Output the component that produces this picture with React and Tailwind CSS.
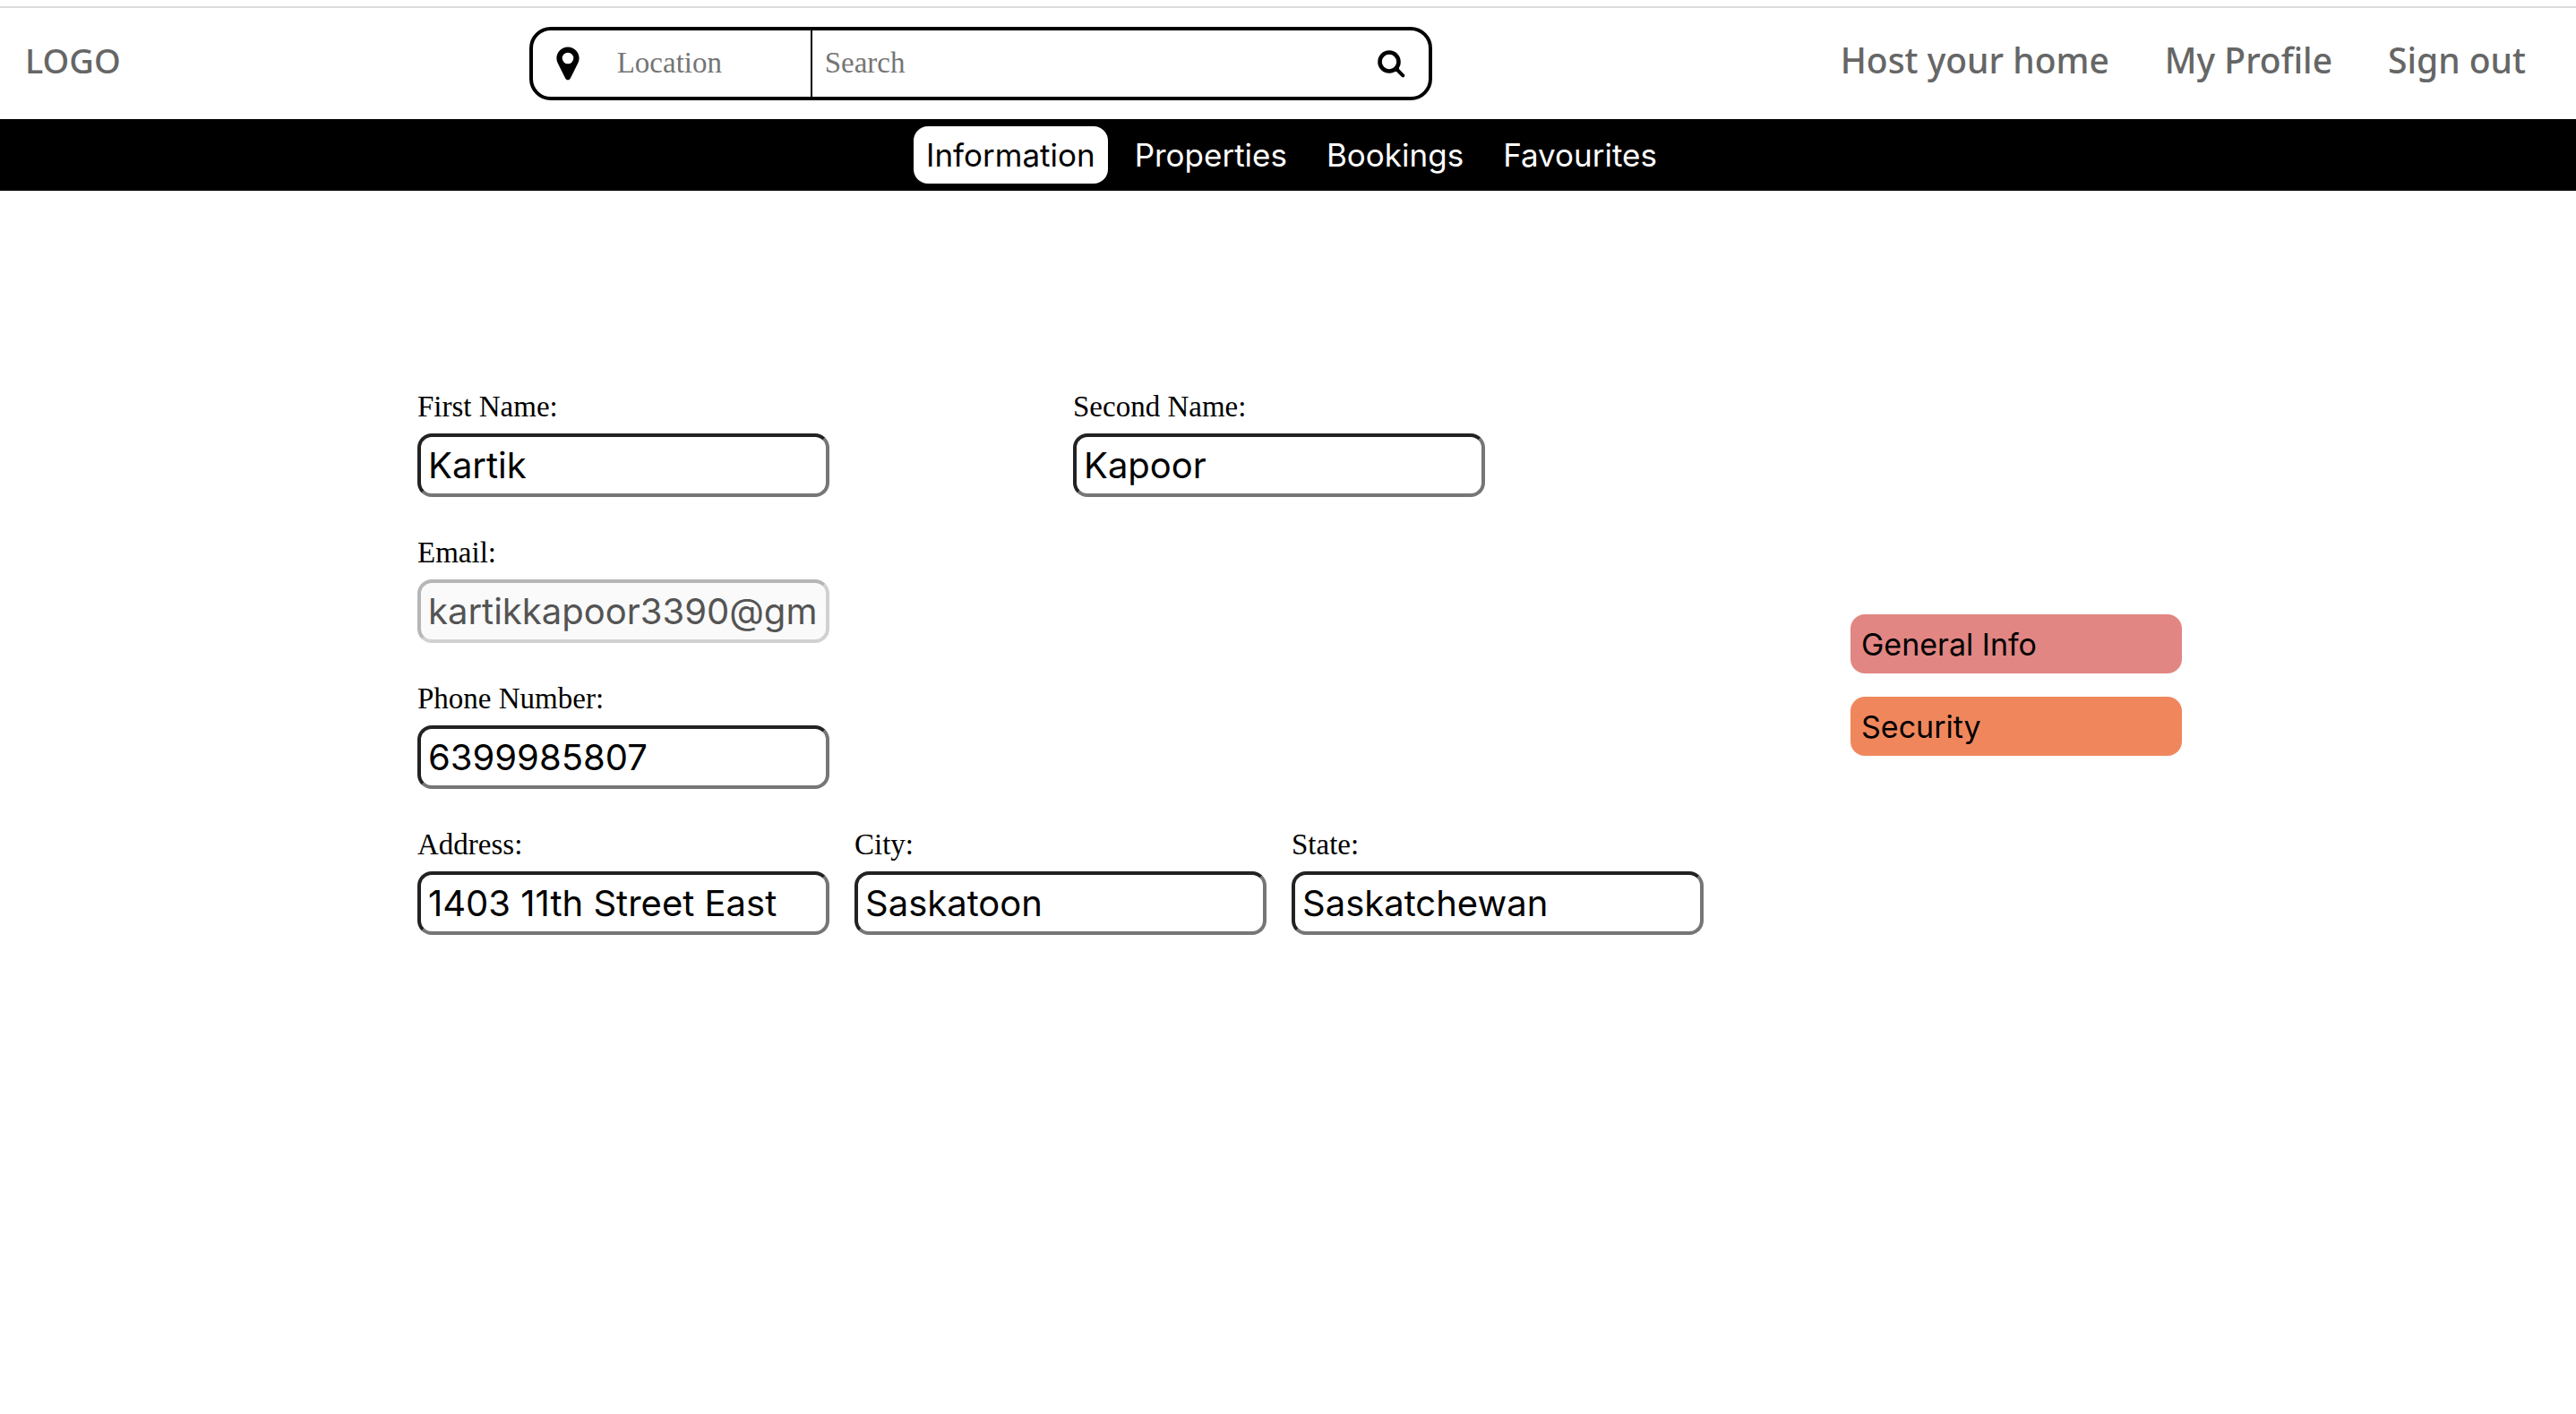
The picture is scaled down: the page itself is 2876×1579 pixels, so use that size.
const links = ["Host your home", "My Profile", "Sign out"];
const tabs = ["Information", "Properties", "Bookings", "Favourites"];

function PinIcon() {
  return (
    <svg viewBox="0 0 26 38" className="h-[38px] w-[26px]" aria-hidden="true">
      <path
        fillRule="evenodd"
        d="M13 .4C6 .4.4 6 .4 13c0 2 .4 3.700 1.200 5.300l8.600 17.200c.6 1.100 1.500 1.800 2.800 1.800s2.200-.7 2.800-1.800l8.600-17.200c.8-1.600 1.200-3.300 1.200-5.300C25.600 6 20 .4 13 .4zm0 6.300a6.300 6.300 0 1 1 0 12.600 6.300 6.300 0 0 1 0-12.600z"
      />
    </svg>
  );
}

function SearchIcon() {
  return (
    <svg viewBox="0 0 31 31" className="size-[31px]" fill="none" stroke="black" aria-hidden="true">
      <circle cx="13" cy="13" r="10.500" strokeWidth="4.600" />
      <path d="M20.500 20.500l2 2" strokeWidth="5" />
      <path d="M22 22l6.300 6.300" strokeWidth="4" strokeLinecap="round" />
    </svg>
  );
}

function Field({ id, label, value, type = "text", disabled = false }) {
  return (
    <div className="flex w-[460px] flex-col">
      <label htmlFor={id} className="h-[52px] font-['Liberation_Serif',serif] text-[33px] leading-[44px]">
        {label}
      </label>
      <input
        id={id}
        type={type}
        defaultValue={value}
        disabled={disabled}
        className="h-[71px] w-full rounded-2xl border-4 border-t-[#222] border-r-[#767676] border-b-[#767676] border-l-[#222] bg-white px-2 text-[40px] disabled:border-t-[#b6b6b6] disabled:border-r-[#d1d1d1] disabled:border-b-[#d1d1d1] disabled:border-l-[#b6b6b6] disabled:bg-[#fafafa] disabled:text-[#545454]"
      />
    </div>
  );
}

export default function App() {
  return (
    <div className="min-h-screen bg-white pt-[7px] font-['Inter',sans-serif] text-black">
      <header className="flex h-[126px] items-center justify-between border-t-2 border-[#dcdcdc] pr-[56px] pl-7 font-['Noto_Sans',sans-serif] font-medium text-[#666]">
        <a href="#home" className="pb-2 text-[38px]">LOGO</a>
        <form role="search" className="flex h-[82px] w-[1008px] items-stretch rounded-3xl border-4 border-black font-['Liberation_Serif',serif] text-[33px] font-normal text-black">
          <div className="flex w-[312px] items-center border-r-2 border-black pl-[26px]">
            <PinIcon />
            <input
              aria-label="Location"
              placeholder="Location"
              className="ml-[42px] w-[200px] bg-transparent outline-none placeholder:text-[#757575]"
            />
          </div>
          <input
            aria-label="Search"
            placeholder="Search"
            className="min-w-0 flex-1 bg-transparent px-[14px] outline-none placeholder:text-[#757575]"
          />
          <button type="submit" aria-label="Submit search" className="pr-[26px] pl-4">
            <SearchIcon />
          </button>
        </form>
        <nav aria-label="Account" className="flex gap-[62px] pb-2 text-[39px]">
          {links.map((text) => (
            <a key={text} href="#account">{text}</a>
          ))}
        </nav>
      </header>

      <nav aria-label="Profile sections" className="flex h-20 items-center justify-center gap-4 bg-black pl-2 text-[35px] text-white">
        {tabs.map((text, i) => (
          <a
            key={text}
            href="#section"
            aria-current={i === 0 ? "page" : undefined}
            className="flex h-16 items-center rounded-2xl px-[14px] aria-[current=page]:bg-white aria-[current=page]:text-black"
          >
            {text}
          </a>
        ))}
      </nav>

      <main className="flex items-center justify-center gap-[164px] pt-[219px] pl-[26px]">
        <form className="flex flex-col gap-10 pb-[54px]">
          <div className="flex gap-[272px]">
            <Field id="first-name" label="First Name:" value="Kartik" />
            <Field id="second-name" label="Second Name:" value="Kapoor" />
          </div>
          <Field id="email" label="Email:" type="email" value="kartikkapoor3390@gmail.com" disabled />
          <Field id="phone" label="Phone Number:" type="tel" value="6399985807" />
          <div className="flex gap-7">
            <Field id="address" label="Address:" value="1403 11th Street East" />
            <Field id="city" label="City:" value="Saskatoon" />
            <Field id="state" label="State:" value="Saskatchewan" />
          </div>
        </form>
        <aside className="flex w-[370px] flex-col gap-[26px] text-[34px]">
          <button type="button" className="h-[66px] rounded-2xl bg-[#e18683] px-3 text-left">General Info</button>
          <button type="button" className="h-[66px] rounded-2xl bg-[#f0875c] px-3 text-left">Security</button>
        </aside>
      </main>
    </div>
  );
}
